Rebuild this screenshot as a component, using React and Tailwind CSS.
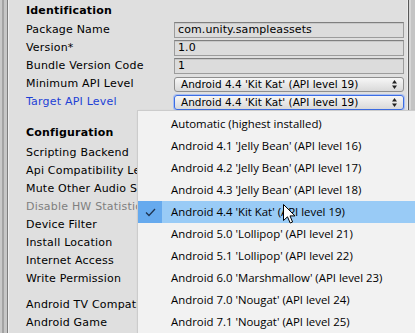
import React from "react";

const V = { fontFamily: '"DejaVu Sans", Verdana, sans-serif' };
const M = { fontFamily: '"Open Sans", "Noto Sans", sans-serif' };

function Label({ children, className = "" }) {
  return (
    <div className={`w-[165px] shrink-0 pl-[17px] whitespace-nowrap text-[11px] leading-[18px] tracking-[0.2px] ${className}`}>
      {children}
    </div>
  );
}

function TextRow({ label, value }) {
  return (
    <div className="flex h-[18px] items-center">
      <Label className="text-black">{label}</Label>
      <div className="h-[16px] w-[230px] border border-[#9c9c9c] border-t-[#7f7f7f] bg-[#dcdcdc] pl-[3px] text-[11px] leading-[14px] tracking-[0.1px] text-black shadow-[inset_0_1px_0_#c8c8c8]">
        {value}
      </div>
    </div>
  );
}

function Arrows() {
  return (
    <svg width="5" height="9" viewBox="0 0 5 9" className="mr-[6px]">
      <path d="M2.5 0 L5 3.5 L0 3.5 Z" fill="#222" />
      <path d="M2.5 9 L5 5.5 L0 5.5 Z" fill="#222" />
    </svg>
  );
}

function PopupRow({ label, value, active }) {
  return (
    <div className="flex h-[18px] items-center">
      <Label className={active ? "text-[#1d3fd6]" : "text-black"}>{label}</Label>
      <div
        className={`flex h-[15px] w-[230px] items-center justify-between rounded-[3px] border bg-gradient-to-b from-[#f7f7f7] to-[#d9d9d9] pl-[6px] text-[10.5px] text-black ${
          active ? "border-[#3c6de4] shadow-[0_0_0_1px_#a9bff2]" : "border-[#8e8e8e]"
        }`}
      >
        <span className="leading-[13px]">{value}</span>
        <Arrows />
      </div>
    </div>
  );
}

function SimpleRow({ children, className = "" }) {
  return (
    <div className="flex h-[18px] items-center">
      <Label className={className}>{children}</Label>
    </div>
  );
}

const items = [
  "Automatic (highest installed)",
  "Android 4.1 'Jelly Bean' (API level 16)",
  "Android 4.2 'Jelly Bean' (API level 17)",
  "Android 4.3 'Jelly Bean' (API level 18)",
  "Android 4.4 'Kit Kat' (API level 19)",
  "Android 5.0 'Lollipop' (API level 21)",
  "Android 5.1 'Lollipop' (API level 22)",
  "Android 6.0 'Marshmallow' (API level 23)",
  "Android 7.0 'Nougat' (API level 24)",
  "Android 7.1 'Nougat' (API level 25)",
];

export default function App() {
  const api = "Android 4.4 'Kit Kat' (API level 19)";
  return (
    <div className="relative flex h-[333px] w-[415px] overflow-hidden bg-[#dfdfdf]" style={V}>
      {/* left frame */}
      <div className="flex h-full shrink-0">
        <div className="w-[2px] bg-[#c9c9c9]" />
        <div className="w-[2px] bg-[#a3a3a3]" />
        <div className="w-[3px] bg-[#c6c6c6]" />
        <div className="w-[1px] bg-[#7e7e7e]" />
        <div className="w-[1px] bg-[#efefef]" />
      </div>

      {/* content */}
      <div className="flex w-[398px] shrink-0 flex-col pt-[1px]">
        <div className="flex h-[20px] items-center pl-[17px] text-[11px] font-bold tracking-[0.2px] text-black">Identification</div>
        <TextRow label="Package Name" value="com.unity.sampleassets" />
        <TextRow label="Version*" value="1.0" />
        <TextRow label="Bundle Version Code" value="1" />
        <PopupRow label="Minimum API Level" value={api} />
        <PopupRow label="Target API Level" value={api} active />

        <div className="mt-[11px] flex h-[22px] items-center pl-[17px] text-[11px] font-bold tracking-[0.2px] text-black">Configuration</div>
        <SimpleRow className="text-black">Scripting Backend</SimpleRow>
        <SimpleRow className="text-black">Api Compatibility Level</SimpleRow>
        <SimpleRow className="text-black">Mute Other Audio Sources</SimpleRow>
        <SimpleRow className="text-[#808080]">Disable HW Statistics</SimpleRow>
        <SimpleRow className="text-black">Device Filter</SimpleRow>
        <SimpleRow className="text-black">Install Location</SimpleRow>
        <SimpleRow className="text-black">Internet Access</SimpleRow>
        <SimpleRow className="text-black">Write Permission</SimpleRow>
        <div className="h-[8px]" />
        <SimpleRow className="text-black">Android TV Compatibility</SimpleRow>
        <SimpleRow className="text-black">Android Game</SimpleRow>
      </div>

      {/* right frame */}
      <div className="flex h-full shrink-0">
        <div className="w-[1px] bg-[#ececec]" />
        <div className="w-[1px] bg-[#585858]" />
        <div className="w-[2px] bg-[#d6d6d6]" />
        <div className="w-[4px] bg-[#c4c4c4]" />
      </div>

      {/* dropdown menu */}
      <div
        className="absolute left-[137px] top-[110px] w-[300px] border border-[#cccccc] bg-[#f2f2f2] pt-[2px] pb-[4px] shadow-[2px_2px_3px_rgba(0,0,0,0.25)]"
        style={M}
      >
        {items.map((t, i) => {
          const sel = i === 4;
          return (
            <div key={t} className={`flex h-[22px] items-center ${sel ? "bg-[#99cbf6]" : ""}`}>
              <div className={`flex h-full w-[24px] items-center justify-center ${sel ? "bg-[#66aaee]" : ""}`}>
                {sel && (
                  <svg width="11" height="9" viewBox="0 0 11 9">
                    <path d="M1 4.5 L4 7.5 L10 1" fill="none" stroke="#1f3552" strokeWidth="1.3" />
                  </svg>
                )}
              </div>
              <div className="pl-[9px] whitespace-nowrap text-[11.4px] text-black">{t}</div>
            </div>
          );
        })}
      </div>

      {/* mouse cursor */}
      <svg className="absolute left-[283px] top-[204px]" width="13" height="20" viewBox="0 0 13 20">
        <path
          d="M0.5 0.5 L0.5 16.5 L4.5 12.8 L7.2 19 L9.6 18 L7 11.9 L12 11.9 Z"
          fill="#ffffff"
          stroke="#000000"
          strokeWidth="1"
          strokeLinejoin="miter"
        />
      </svg>
    </div>
  );
}
